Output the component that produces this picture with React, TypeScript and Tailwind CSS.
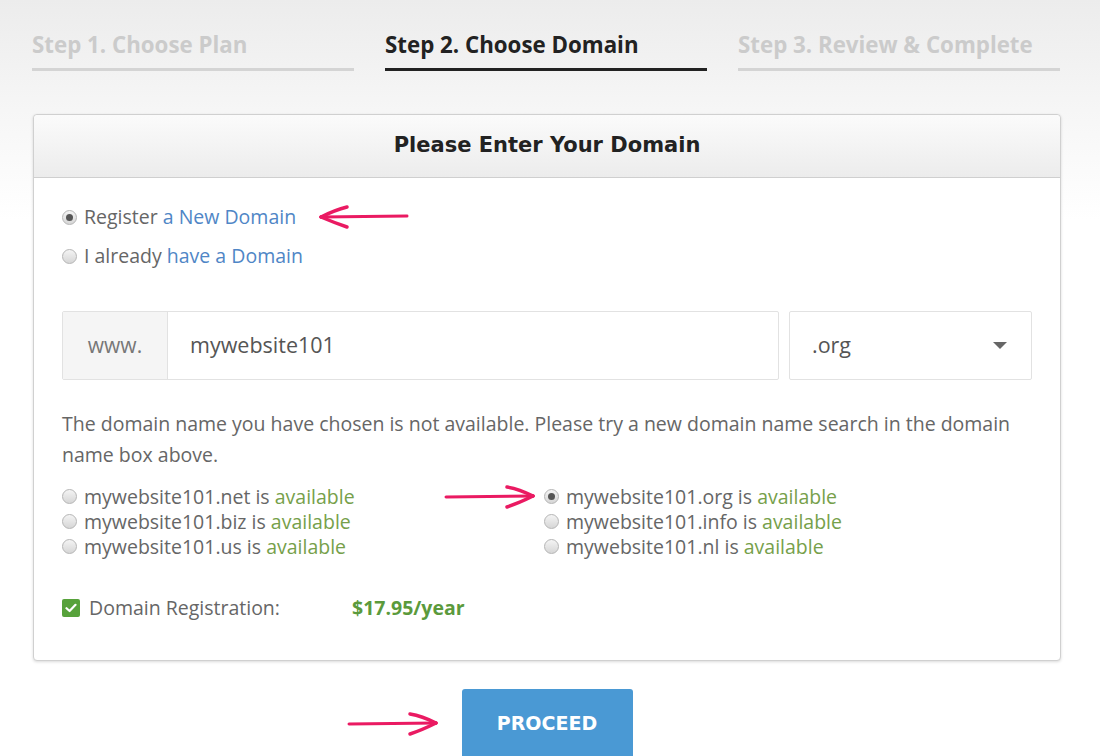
import type { ReactNode } from "react";

function Radio({ checked = false }: { checked?: boolean }) {
  return (
    <span className="inline-flex w-[15px] h-[15px] rounded-full border border-[#b5b5b5] bg-gradient-to-b from-[#f4f4f4] to-[#d6d6d6] items-center justify-center mr-[7px] shrink-0">
      {checked && <span className="w-[7px] h-[7px] rounded-full bg-[#555]" />}
    </span>
  );
}

function Arrow({ dir, className }: { dir: "left" | "right"; className: string }) {
  return (
    <svg className={`absolute ${className}`} width="94" height="28" viewBox="0 0 94 28" fill="none">
      {dir === "left" ? (
        <g stroke="#ea1a62" strokeLinecap="round">
          <path d="M4 14 L90 13" strokeWidth="3" />
          <path d="M4 14 Q18 7 30 4" strokeWidth="3.5" />
          <path d="M4 14 Q18 20 30 24" strokeWidth="3.5" />
        </g>
      ) : (
        <g stroke="#ea1a62" strokeLinecap="round">
          <path d="M3 14 L90 13" strokeWidth="3" />
          <path d="M90 13 Q76 6 64 4" strokeWidth="3.5" />
          <path d="M90 13 Q76 20 64 24" strokeWidth="3.5" />
        </g>
      )}
    </svg>
  );
}

function Option({ name, checked }: { name: string; checked?: boolean }) {
  return (
    <div className="flex items-center h-[25px]">
      <Radio checked={checked} />
      <span>
        {name} is <span className="text-[#76a04a]">available</span>
      </span>
    </div>
  );
}

function Step({ label, active }: { label: ReactNode; active?: boolean }) {
  return (
    <div className="flex flex-col">
      <div className={`text-[22.3px] leading-[28px] font-bold ${active ? "text-[#222]" : "text-[#cbcbcb]"}`}>{label}</div>
      <div className={`mt-[9px] h-[3px] ${active ? "bg-[#222]" : "bg-[#d4d4d4]"}`} />
    </div>
  );
}

export default function App() {
  return (
    <div
      className="relative w-full h-[756px] overflow-hidden px-[32px] text-[#666]"
      style={{ fontFamily: '"Open Sans", "Liberation Sans", sans-serif', backgroundImage: "linear-gradient(to bottom, #ececec 0px, #f6f6f6 110px, #ffffff 220px)" }}
    >
      <div className="grid grid-cols-3 gap-[31px] pt-[31px] w-[1028px]">
        <Step label="Step 1. Choose Plan" />
        <Step label="Step 2. Choose Domain" active />
        <Step label="Step 3. Review & Complete" />
      </div>

      <div className="mt-[43px] ml-px w-[1028px] bg-white border border-[#d0d0d0] rounded-[4px] shadow-[0_1px_3px_rgba(0,0,0,0.15)]">
        <div className="h-[63px] flex items-center justify-center bg-gradient-to-b from-[#fbfbfb] to-[#ececec] border-b border-[#cfcfcf] rounded-t-[4px]">
          <span className="text-[21px] font-bold text-[#222]" style={{ fontFamily: '"DejaVu Sans", sans-serif' }}>
            Please Enter Your Domain
          </span>
        </div>

        <div className="px-[28px] pt-[26px] pb-[39px] text-[19.5px]">
          <div className="flex items-center h-[26px]">
            <Radio checked />
            <span>
              Register <span className="text-[#4f86c6]">a New Domain</span>
            </span>
          </div>
          <div className="flex items-center h-[26px] mt-[13px]">
            <Radio />
            <span>
              I already <span className="text-[#4f86c6]">have a Domain</span>
            </span>
          </div>

          <div className="flex mt-[42px] h-[69px] gap-[10px]">
            <div className="flex flex-1 border border-[#e2e2e2] rounded-[2px]">
              <div className="w-[105px] bg-[#f5f5f5] border-r border-[#e2e2e2] flex items-center justify-center text-[21px] text-[#777]">
                www.
              </div>
              <div className="flex-1 flex items-center pl-[22px] text-[21.5px] text-[#555]">mywebsite101</div>
            </div>
            <div className="w-[243px] border border-[#e2e2e2] rounded-[2px] flex items-center justify-between pl-[22px] pr-[24px] text-[21.5px] text-[#555]">
              <span>.org</span>
              <span className="w-0 h-0 border-l-[7px] border-r-[7px] border-t-[7px] border-l-transparent border-r-transparent border-t-[#666]" />
            </div>
          </div>

          <p className="mt-[28px] leading-[31px]">
            The domain name you have chosen is not available. Please try a new domain name search in the domain name box above.
          </p>

          <div className="grid grid-cols-[482px_1fr] mt-[14px]">
            <div>
              <Option name="mywebsite101.net" />
              <Option name="mywebsite101.biz" />
              <Option name="mywebsite101.us" />
            </div>
            <div>
              <Option name="mywebsite101.org" checked />
              <Option name="mywebsite101.info" />
              <Option name="mywebsite101.nl" />
            </div>
          </div>

          <div className="flex items-center h-[26px] mt-[36px]">
            <span className="w-[18px] h-[18px] rounded-[2px] bg-[#57a23b] flex items-center justify-center mr-[9px]">
              <svg width="12" height="10" viewBox="0 0 12 10" fill="none">
                <path d="M1.5 5.2 L4.6 8 L10.5 1.8" stroke="white" strokeWidth="2.2" strokeLinecap="round" strokeLinejoin="round" />
              </svg>
            </span>
            <span className="w-[263px]">Domain Registration:</span>
            <span className="font-bold text-[#5b9a3c]">$17.95/year</span>
          </div>
        </div>
      </div>

      <div className="flex justify-center w-[1030px] mt-[28px]">
        <button
          className="w-[171px] h-[70px] bg-[#4a99d4] rounded-t-[3px] text-white text-[19px] font-bold pb-[2px]"
          style={{ fontFamily: '"DejaVu Sans", sans-serif' }}
        >
          PROCEED
        </button>
      </div>

      <Arrow dir="left" className="left-[317px] top-[203px]" />
      <Arrow dir="right" className="left-[443px] top-[483px]" />
      <Arrow dir="right" className="left-[346px] top-[710px]" />
    </div>
  );
}
